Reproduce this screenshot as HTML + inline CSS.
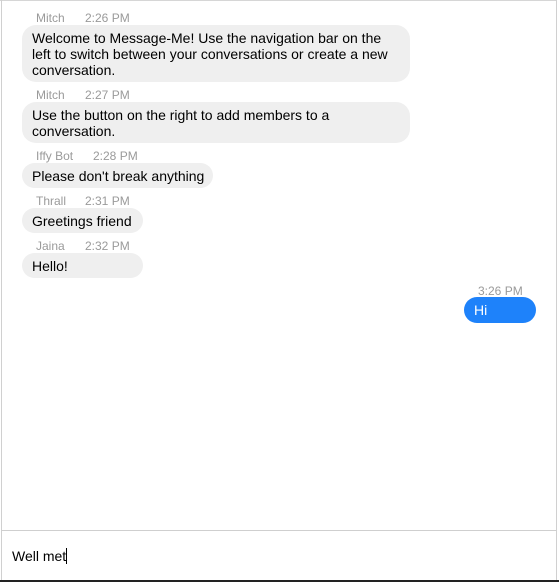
<html><head><style>
body{margin:0;width:559px;height:582px;position:relative;font-family:"Liberation Sans",Arial,sans-serif;background:#fff;overflow:hidden}
.a{position:absolute}
.m{font-size:12px;color:#9a9a9a;line-height:14px}
.b{position:absolute;background:#efefef;border-radius:14px;font-size:14px;line-height:16px;color:#000;padding:5px 10px;box-sizing:border-box;white-space:nowrap}
</style></head><body>
<div class="a" style="left:0;top:0;width:557px;height:1px;background:#d6d6d6"></div>
<div class="a" style="left:1px;top:0;width:1px;height:582px;background:#d0d0d0"></div>
<div class="a" style="left:556px;top:0;width:1px;height:582px;background:#d0d0d0"></div>
<div class="a" style="left:1px;top:530px;width:556px;height:1px;background:#cfcfcf"></div>
<div class="a" style="left:0;top:580px;width:559px;height:2px;background:#222"></div>

<div class="a m" style="left:36px;top:11px">Mitch</div><div class="a m" style="left:85px;top:11px">2:26 PM</div>
<div class="b" style="left:22px;top:25px;width:388px;height:57px;white-space:normal">Welcome to Message-Me! Use the navigation bar on the left to switch between your conversations or create a new conversation.</div>

<div class="a m" style="left:36px;top:88px">Mitch</div><div class="a m" style="left:85px;top:88px">2:27 PM</div>
<div class="b" style="left:22px;top:102px;width:388px;height:41px;white-space:normal">Use the button on the right to add members to a conversation.</div>

<div class="a m" style="left:36px;top:149px">Iffy Bot</div><div class="a m" style="left:93px;top:149px">2:28 PM</div>
<div class="b" style="left:22px;top:163px;width:191px;height:25px">Please don't break anything</div>

<div class="a m" style="left:36px;top:194px">Thrall</div><div class="a m" style="left:85px;top:194px">2:31 PM</div>
<div class="b" style="left:22px;top:208px;width:121px;height:25px">Greetings friend</div>

<div class="a m" style="left:36px;top:239px">Jaina</div><div class="a m" style="left:85px;top:239px">2:32 PM</div>
<div class="b" style="left:22px;top:253px;width:121px;height:25px">Hello!</div>

<div class="a m" style="left:478px;top:284px">3:26 PM</div>
<div class="b" style="left:464px;top:297px;width:72px;height:26px;background:#1e82fa;color:#fff">Hi</div>

<div class="a" style="left:12px;top:548px;font-size:14px;line-height:16px">Well met<span style="display:inline-block;width:1px;height:16px;background:#000;vertical-align:-3px"></span></div>
</body></html>
